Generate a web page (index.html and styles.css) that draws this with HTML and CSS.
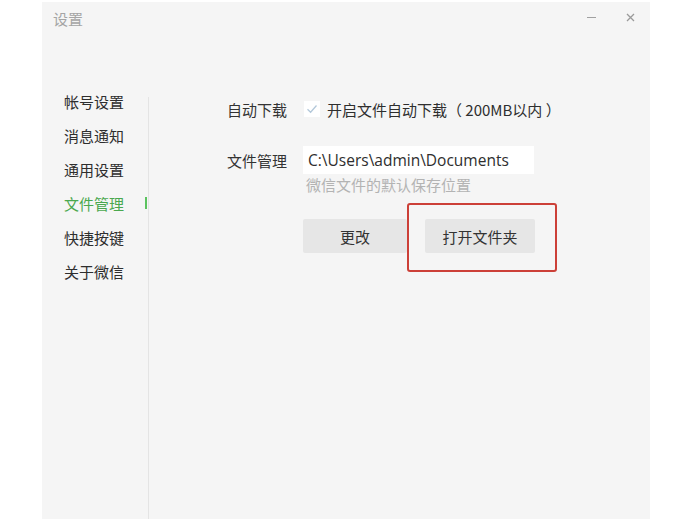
FILE: index.html
```html
<!DOCTYPE html>
<html lang="zh-CN">
<head>
    <meta charset="UTF-8">
    <title>设置</title>
    <link rel="stylesheet" href="styles.css">
</head>
<body>
    <div class="window">
        <div class="titlebar">
            <span class="title">设置</span>
            <div class="win-controls">
                <span class="win-min"></span>
                <svg class="win-close" width="9" height="9" viewBox="0 0 9 9">
                    <path d="M1 1L8 8M8 1L1 8" stroke="#9a9a9a" stroke-width="1.3" fill="none"/>
                </svg>
            </div>
        </div>

        <div class="main">
            <!-- left menu -->
            <ul class="menu">
                <li>帐号设置</li>
                <li>消息通知</li>
                <li>通用设置</li>
                <li class="active">文件管理</li>
                <li>快捷按键</li>
                <li>关于微信</li>
            </ul>
            <div class="divider"></div>

            <!-- file settings -->
            <div class="content">
                <div class="row row-auto">
                    <span class="label">自动下载</span>
                    <label class="check">
                        <span class="box">
                            <svg width="12" height="10" viewBox="0 0 12 10">
                                <path d="M1.5 5.2L4.6 8.2L10.5 1.5" stroke="#b3c8da" stroke-width="1.3" fill="none"/>
                            </svg>
                        </span>
                        <span class="check-text">开启文件自动下载（&nbsp;200MB以内&nbsp;）</span>
                    </label>
                </div>

                <div class="row row-path">
                    <span class="label">文件管理</span>
                    <div class="path-box">C:\Users\admin\Documents</div>
                </div>
                <div class="hint">微信文件的默认保存位置</div>

                <div class="buttons">
                    <button class="btn btn-change">更改</button>
                    <div class="highlight">
                        <button class="btn btn-open">打开文件夹</button>
                    </div>
                </div>
            </div>
        </div>
    </div>
</body>
</html>
```

FILE: styles.css
```css
body {
    margin: 0;
    padding: 0;
    background-color: #ffffff;
    font-family: "Noto Sans CJK SC", "Noto Sans", sans-serif;
    color: #333;
}

.window {
    margin-left: 42px;
    margin-top: 2px;
    width: 608px;
    height: 517px;
    background-color: #f5f5f5;
    display: flex;
    flex-direction: column;
}

.titlebar {
    height: 82px;
    display: flex;
    justify-content: space-between;
    align-items: flex-start;
}

.title {
    margin-left: 11px;
    margin-top: 6px;
    font-size: 15px;
    line-height: 22px;
    color: #a5a5a5;
}

.win-controls {
    display: flex;
    align-items: center;
    margin-top: 9px;
    margin-right: 15px;
    height: 12px;
}

.win-min {
    width: 9px;
    height: 1px;
    background-color: #a0a0a0;
    margin-right: 30px;
}

.main {
    flex: 1;
    display: flex;
}

.menu {
    list-style: none;
    margin: 0;
    padding: 0;
    width: 106px;
}

.menu li {
    display: flex;
    align-items: center;
    height: 34px;
    padding-left: 22px;
    font-size: 15px;
    color: #2e2e2e;
}

.menu li.active {
    color: #4aa84e;
}

.menu li.active::after {
    content: "";
    width: 2px;
    height: 12px;
    margin-left: auto;
    margin-right: 1px;
    background-color: #5bc35f;
}

.divider {
    width: 1px;
    margin-top: 13px;
    background-color: #e4e4e4;
}

.content {
    padding-left: 76px;
    padding-top: 13px;
}

.row {
    display: flex;
    align-items: center;
}

.label {
    width: 62px;
    margin-right: 16px;
    font-size: 15px;
    text-align: right;
}

.row-auto {
    height: 24px;
}

.check {
    display: flex;
    align-items: center;
    font-size: 15px;
    color: #2e2e2e;
}

.check-text {
    white-space: nowrap;
}

.box {
    width: 16px;
    height: 16px;
    margin-left: 1px;
    margin-right: 7px;
    background-color: #ffffff;
    display: flex;
    align-items: center;
    justify-content: center;
}

.row-path {
    margin-top: 25px;
}

.path-box {
    width: 226px;
    height: 28px;
    padding-left: 5px;
    background-color: #ffffff;
    font-family: "Open Sans", "Noto Sans CJK SC", sans-serif;
    font-size: 15.5px;
    line-height: 28px;
    color: #2e2e2e;
}

.hint {
    margin-left: 81px;
    font-size: 15px;
    line-height: 22px;
    color: #b3b3b3;
}

.buttons {
    margin-top: 7px;
    margin-left: 78px;
    display: flex;
    align-items: flex-start;
}

.btn {
    border: none;
    height: 34px;
    font-family: "Noto Sans CJK SC", sans-serif;
    font-size: 15px;
    color: #333;
    background-color: #e6e6e6;
    border-radius: 2px;
    padding: 0;
}

.btn-change {
    width: 104px;
    margin-top: 16px;
}

.btn-open {
    width: 110px;
}

.highlight {
    border: 2px solid #cc4038;
    border-radius: 3px;
    padding: 14px 20px 17px 16px;
}
```
